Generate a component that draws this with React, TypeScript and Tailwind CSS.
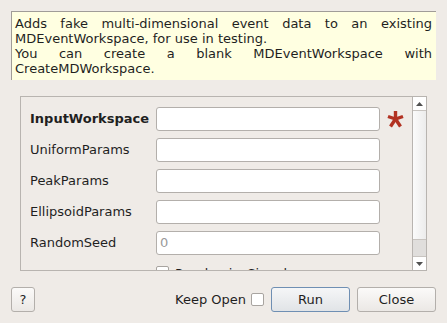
import React from "react";

const ff = { fontFamily: '"DejaVu Sans", Verdana, sans-serif' };

function Field({ label, bold, placeholder, star }: { label: string; bold?: boolean; placeholder?: string; star?: boolean }) {
  return (
    <div className="flex items-center h-[24px] shrink-0">
      <div className={`w-[126px] shrink-0 ${bold ? "font-bold" : ""}`}>{label}</div>
      <div className="w-[224px] h-[24px] shrink-0 bg-white border border-[#b3afab] rounded-[3px] flex items-center px-[3px] text-[#9a9a9a]">
        {placeholder}
      </div>
      {star && (
        <div className="ml-[7px] w-[17px] h-[24px] flex items-center justify-center">
          <svg width="17" height="18" viewBox="0 0 17 18">
            <g stroke="#b23222" strokeWidth="3.4" strokeLinecap="butt">
              <line x1="8.5" y1="1" x2="8.5" y2="9" />
              <line x1="1" y1="6.5" x2="8.5" y2="9" />
              <line x1="16" y1="6.5" x2="8.5" y2="9" />
              <line x1="3.5" y1="16.5" x2="8.5" y2="9" />
              <line x1="13.5" y1="16.5" x2="8.5" y2="9" />
            </g>
          </svg>
        </div>
      )}
    </div>
  );
}

export default function App() {
  return (
    <div className="w-[447px] h-[323px] bg-[#efebe7] text-[13px] text-[#1f1f1f] flex flex-col overflow-hidden" style={ff}>
      <div className="mt-[11px] ml-[11px] w-[425px] h-[69px] bg-[#ffffe1] border-t border-l border-[#a09c98] pl-[3px] pr-[4px] pt-[4px] leading-[15px]">
        <p className="text-justify" style={{ textAlignLast: "left" }}>
          Adds fake multi-dimensional event data to an existing MDEventWorkspace, for use in testing.
        </p>
        <p className="text-justify" style={{ textAlignLast: "left" }}>
          You can create a blank MDEventWorkspace with CreateMDWorkspace.
        </p>
      </div>

      <div className="mt-[16px] ml-[20px] w-[407px] h-[175px] border border-[#b8b4b0] flex overflow-hidden">
        <div className="flex-1 overflow-hidden pl-[9px] pt-[10px] flex flex-col gap-[7px]">
          <Field label="InputWorkspace" bold star />
          <Field label="UniformParams" />
          <Field label="PeakParams" />
          <Field label="EllipsoidParams" />
          <Field label="RandomSeed" placeholder="0" />
          <div className="flex items-start h-[24px] shrink-0 pl-[126px] pt-[4px]">
            <div className="w-[13px] h-[13px] shrink-0 bg-white border border-[#a8a4a0] rounded-[2px]" />
            <span className="ml-[6px] leading-[15px]">RandomizeSignal</span>
          </div>
        </div>
        <div className="w-[14px] shrink-0 border-l border-[#b8b4b0] flex flex-col bg-gradient-to-r from-[#fbfbfb] to-[#ececec]">
          <div className="h-[14px] border-b border-[#c8c4c0] flex items-center justify-center bg-white">
            <svg width="7" height="4" viewBox="0 0 7 4"><path d="M0 4 L3.5 0 L7 4 Z" fill="#505050" /></svg>
          </div>
          <div className="flex-1" />
          <div className="h-[17px] bg-[#e0dedc] border-t border-[#c8c4c0]" />
          <div className="h-[14px] border-t border-[#c8c4c0] flex items-center justify-center bg-white">
            <svg width="7" height="4" viewBox="0 0 7 4"><path d="M0 0 L7 0 L3.5 4 Z" fill="#505050" /></svg>
          </div>
        </div>
      </div>

      <div className="mt-[16px] px-[11px] flex items-center h-[25px]">
        <button className="w-[24px] h-[25px] border border-[#b3afab] rounded-[3px] bg-gradient-to-b from-[#fbfaf9] to-[#ebe8e5] flex items-center justify-center" style={ff}>
          ?
        </button>
        <div className="flex-1" />
        <span>Keep Open</span>
        <div className="ml-[5px] w-[13px] h-[13px] bg-white border border-[#a8a4a0] rounded-[2px]" />
        <button className="ml-[7px] w-[79px] h-[25px] border border-[#6f8fb3] rounded-[3px] bg-gradient-to-b from-[#f5f6f7] to-[#e1e4e7] flex items-center justify-center" style={ff}>
          Run
        </button>
        <button className="ml-[7px] w-[79px] h-[25px] border border-[#b3afab] rounded-[3px] bg-gradient-to-b from-[#fbfaf9] to-[#ebe8e5] flex items-center justify-center" style={ff}>
          Close
        </button>
      </div>
    </div>
  );
}
